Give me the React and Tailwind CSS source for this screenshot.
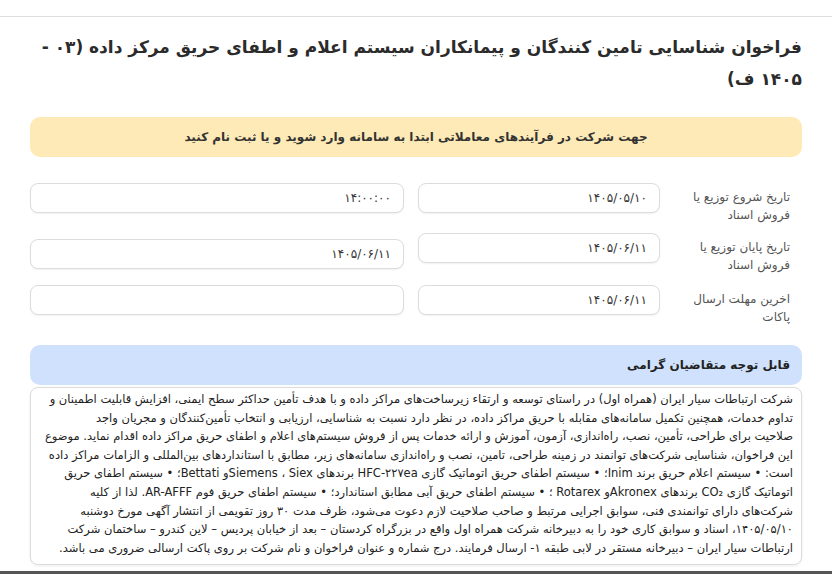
import React from 'react'

const rows = [
  { label: 'تاریخ شروع توزیع یا فروش اسناد', value: '۱۴۰۵/۰۵/۱۰', h: 'h-[50px]' },
  { label: 'تاریخ پایان توزیع یا فروش اسناد', value: '۱۴۰۵/۰۶/۱۱', h: 'h-[52px]' },
  { label: 'اخرین مهلت ارسال پاکات', value: '۱۴۰۵/۰۶/۱۱', h: 'h-[46px]' },
]

const lines = [
  'شرکت ارتباطات سیار ایران (همراه اول) در راستای توسعه و ارتقاء زیرساخت‌های مراکز داده و با هدف تأمین حداکثر سطح ایمنی، افزایش قابلیت اطمینان و',
  'تداوم خدمات، همچنین تکمیل سامانه‌های مقابله با حریق مراکز داده، در نظر دارد نسبت به شناسایی، ارزیابی و انتخاب تأمین‌کنندگان و مجریان واجد',
  'صلاحیت برای طراحی، تأمین، نصب، راه‌اندازی، آزمون، آموزش و ارائه خدمات پس از فروش سیستم‌های اعلام و اطفای حریق مراکز داده اقدام نماید. موضوع',
  'این فراخوان، شناسایی شرکت‌های توانمند در زمینه طراحی، تامین، نصب و راه‌اندازی سامانه‌های زیر، مطابق با استانداردهای بین‌المللی و الزامات مراکز داده',
  'است: • سیستم اعلام حریق برند Inim؛ • سیستم اطفای حریق اتوماتیک گازی HFC-۲۲۷ea برندهای Siemens ، Siexو Bettati؛ • سیستم اطفای حریق',
  'اتوماتیک گازی CO₂ برندهای Akronexو Rotarex ؛ • سیستم اطفای حریق آبی مطابق استاندارد؛ • سیستم اطفای حریق فوم AR-AFFF. لذا از کلیه',
  'شرکت‌های دارای توانمندی فنی، سوابق اجرایی مرتبط و صاحب صلاحیت لازم دعوت می‌شود، ظرف مدت ۳۰ روز تقویمی از انتشار آگهی مورخ دوشنبه',
  '۱۴۰۵/۰۵/۱۰، اسناد و سوابق کاری خود را به دبیرخانه شرکت همراه اول واقع در بزرگراه کردستان – بعد از خیابان پردیس – لاین کندرو – ساختمان شرکت',
  'ارتباطات سیار ایران – دبیرخانه مستقر در لابی طبقه ۱- ارسال فرمایند. درج شماره و عنوان فراخوان و نام شرکت بر روی پاکت ارسالی ضروری می باشد.',
]

const Field = ({ value, className = '' }) => (
  <div
    className={`h-[30px] rounded-[8px] border border-[#dcdcdc] bg-white shadow-[0_1px_2px_rgba(0,0,0,0.06)] flex items-center px-[12px] text-[12px] text-[#333] ${className}`}
  >
    {value}
  </div>
)

const App = () => {
  return (
    <div dir="rtl" className="w-[832px] h-[575px] overflow-hidden bg-white font-['DejaVu_Sans',sans-serif] text-[#222]">
      <div className="h-[17px] border-b border-[#dedede]" />

      <div className="px-[30px]">
        {/* Title */}
        <h1 className="mt-[14px] text-[17px] font-bold leading-[32px] text-[#2b2b2b] whitespace-nowrap">
          فراخوان شناسایی تامین کنندگان و پیمانکاران سیستم اعلام و اطفای حریق مرکز داده (۰۳ -
          <br />
          ۱۴۰۵ ف)
        </h1>

        {/* Login notice */}
        <div className="mt-[22px] h-[40px] rounded-[10px] bg-[#feeab6] flex items-center justify-center text-[12px] font-bold text-[#333]">
          جهت شرکت در فرآیندهای معاملاتی ابتدا به سامانه وارد شوید و یا ثبت نام کنید
        </div>

        {/* Dates */}
        <div className="mt-[26px] flex gap-[14px]">
          <div className="w-[384px] flex flex-col">
            {rows.map((row, i) => (
              <div key={i} className={`flex ${row.h}`}>
                <div className="w-[142px] pr-[12px] pl-[10px] pt-[5px] text-[12px] leading-[18px] text-[#555]">
                  {row.label}
                </div>
                <Field value={row.value} className="w-[242px]" />
              </div>
            ))}
          </div>
          <div className="flex-1 flex flex-col">
            <Field value="۱۴:۰۰:۰۰" />
            <Field value="۱۴۰۵/۰۶/۱۱" className="mt-[26px]" />
            <Field value="" className="mt-[16px]" />
          </div>
        </div>

        {/* Notice */}
        <div className="mt-[14px] h-[40px] rounded-[10px] bg-[#d0e1fd] flex items-center px-[12px] text-[12px] font-bold text-[#222]">
          قابل توجه متقاضیان گرامی
        </div>
        <div className="mt-[2px] h-[178px] rounded-[8px] border border-[#dcdcdc] shadow-[0_1px_3px_rgba(0,0,0,0.08)] px-[8px] pt-[2px] text-[11.5px] leading-[18.6px] text-[#222] whitespace-nowrap">
          {lines.map((line, i) => (
            <div key={i}>{line}</div>
          ))}
        </div>
      </div>

      <div className="mt-[6px] h-[3px] bg-[#555]" />
    </div>
  )
}

export default App
